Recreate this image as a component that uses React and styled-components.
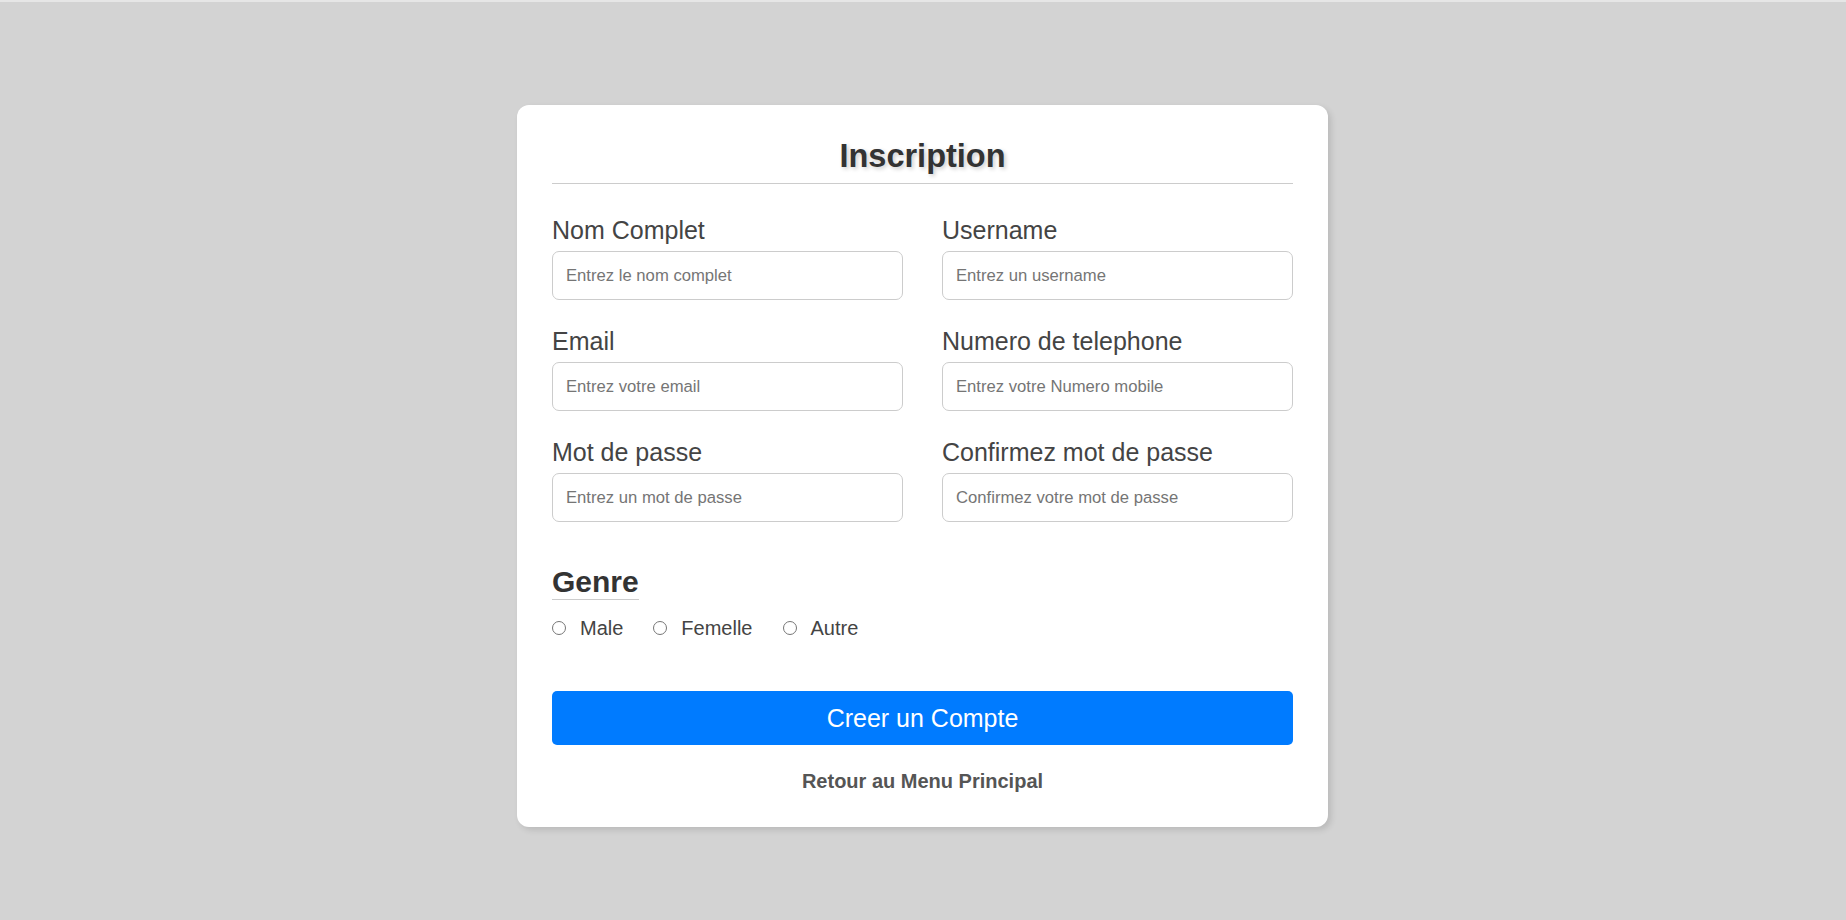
import React from 'react';
import styled, { createGlobalStyle } from 'styled-components';

const GlobalStyle = createGlobalStyle`
  * {
    box-sizing: border-box;
  }

  body {
    margin: 0;
    background: #d3d3d3;
    font-family: "Liberation Sans", Arial, sans-serif;
  }
`;

const Page = styled.div`
  min-height: 920px;
  border-top: 2px solid #e6e6e6;
  padding-top: 103px;
  display: flex;
  justify-content: center;
  align-items: flex-start;
`;

const Card = styled.form`
  width: 811px;
  margin-right: 1px;
  background: #fff;
  border-radius: 12px;
  padding: 28px 35px 34px;
  box-shadow: 3px 3px 6px rgba(0, 0, 0, 0.12);
  display: flex;
  flex-direction: column;
`;

const Title = styled.h2`
  margin: 0;
  padding: 4px 0 8px;
  border-bottom: 1px solid #ccc;
  text-align: center;
  font-size: 32.5px;
  line-height: 38px;
  font-weight: 700;
  color: #333;
  text-shadow: 2px 2px 4px rgba(0, 0, 0, 0.2);
`;

const Fields = styled.div`
  display: grid;
  grid-template-columns: 1fr 1fr;
  column-gap: 39px;
  row-gap: 25px;
  margin-top: 30px;
`;

const Field = styled.div`
  display: flex;
  flex-direction: column;
`;

const Label = styled.label`
  padding-top: 2px;
  font-size: 25px;
  line-height: 29px;
  color: #444;
  margin-bottom: 6px;
`;

const Input = styled.input`
  height: 49px;
  padding: 0 13px;
  border: 1px solid #ccc;
  border-radius: 7px;
  font-family: inherit;
  font-size: 16.67px;
  color: #333;
  outline: none;

  &::placeholder {
    color: #757575;
  }
`;

const Gender = styled.div`
  margin-top: 43px;
  display: flex;
  flex-direction: column;
  align-items: flex-start;
`;

const GenderTitle = styled.span`
  display: inline-block;
  font-size: 30px;
  line-height: 34px;
  font-weight: 700;
  color: #333;
  border-bottom: 1px solid #ccc;
`;

const Options = styled.div`
  display: flex;
  gap: 30px;
  margin-top: 17px;
`;

const Option = styled.label`
  display: flex;
  align-items: center;
  gap: 14px;
  font-size: 20px;
  line-height: 23px;
  color: #444;
`;

const Radio = styled.input`
  appearance: none;
  width: 14px;
  height: 14px;
  margin: 0 0 2px;
  border: 1px solid #767676;
  border-radius: 50%;
  background: #fff;

  &:checked {
    border: 4px solid #0075ff;
  }
`;

const Submit = styled.button`
  margin-top: 51px;
  height: 54px;
  border: none;
  border-radius: 5px;
  background: #007bff;
  color: #fff;
  font-family: inherit;
  font-size: 25px;
  cursor: pointer;
`;

const BackLink = styled.a`
  margin-top: 25px;
  align-self: center;
  font-size: 20px;
  line-height: 23px;
  font-weight: 700;
  color: #555;
  text-decoration: none;
  cursor: pointer;
`;

const fields = [
  { id: 'fullname', label: 'Nom Complet', placeholder: 'Entrez le nom complet' },
  { id: 'username', label: 'Username', placeholder: 'Entrez un username' },
  { id: 'email', label: 'Email', placeholder: 'Entrez votre email', type: 'email' },
  { id: 'phone', label: 'Numero de telephone', placeholder: 'Entrez votre Numero mobile' },
  { id: 'password', label: 'Mot de passe', placeholder: 'Entrez un mot de passe', type: 'password' },
  { id: 'confirm', label: 'Confirmez mot de passe', placeholder: 'Confirmez votre mot de passe', type: 'password' },
];

const genres = ['Male', 'Femelle', 'Autre'];

const App = () => {
  return (
    <>
      <GlobalStyle />
      <Page>
        <Card onSubmit={(e) => e.preventDefault()}>
          <Title>Inscription</Title>
          <Fields>
            {fields.map((f) => (
              <Field key={f.id}>
                <Label htmlFor={f.id}>{f.label}</Label>
                <Input id={f.id} type={f.type || 'text'} placeholder={f.placeholder} />
              </Field>
            ))}
          </Fields>
          <Gender>
            <GenderTitle>Genre</GenderTitle>
            <Options>
              {genres.map((g) => (
                <Option key={g}>
                  <Radio type="radio" name="genre" value={g} />
                  {g}
                </Option>
              ))}
            </Options>
          </Gender>
          <Submit type="submit">Creer un Compte</Submit>
          <BackLink>Retour au Menu Principal</BackLink>
        </Card>
      </Page>
    </>
  );
};

export default App;
